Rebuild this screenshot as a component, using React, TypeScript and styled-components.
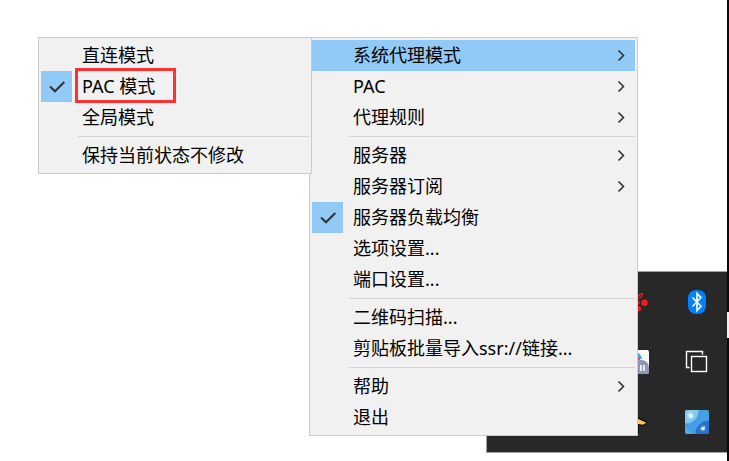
import React from "react";
import styled, { createGlobalStyle, css } from "styled-components";

const GlobalStyle = createGlobalStyle`
  * { box-sizing: border-box; }
  body { margin: 0; background: #fff; }
`;

const Desktop = styled.main`
  position: relative;
  min-height: 100vh;
  overflow: hidden;
  background: #fff;
  color: #000;
  font-family: "Noto Sans", "Noto Sans CJK SC", sans-serif;
  font-size: 18px;
`;

const MenuList = styled.ul`
  margin: 0;
  padding: 2px;
  list-style: none;
  background: #f1f1f1;
  border: 1px solid #ccc;
`;

const ContextMenu = styled(MenuList)`
  position: absolute;
  z-index: 2;
  top: 37px;
  left: 309px;
  min-width: 329px;
`;

const SubMenu = styled(MenuList)`
  position: absolute;
  top: -3px;
  right: 100%;
  min-width: 274px;
`;

const Entry = styled.li`
  position: relative;
`;

const ItemButton = styled.button<{ $active?: boolean }>`
  display: grid;
  grid-template-columns: 31px 1fr 28px;
  align-items: center;
  width: 100%;
  height: 31px;
  padding: 0;
  border: 0;
  background: ${(p) => (p.$active ? "#91c9f7" : "transparent")};
  color: inherit;
  font: inherit;
  line-height: 31px;
  text-align: left;
  white-space: nowrap;
`;

const CheckCell = styled.span<{ $checked?: boolean }>`
  display: grid;
  place-items: center;
  height: 31px;
  background: ${(p) => (p.$checked ? "#91c9f7" : "transparent")};
`;

const Label = styled.span<{ $marked?: boolean }>`
  position: relative;
  justify-self: start;
  height: 31px;
  margin-left: 10px;
  margin-right: 24px;
  ${(p) =>
    p.$marked &&
    css`
      &::after {
        content: "";
        position: absolute;
        inset: -3px -21px -1px -7px;
        border: 3px solid #ff3232;
      }
    `}
`;

const Separator = styled.li`
  height: 1px;
  margin: 3px 0 3px 37px;
  background: #d4d4d4;
`;

const Tray = styled.section`
  position: absolute;
  top: 271px;
  right: 2px;
  display: grid;
  grid-template-columns: repeat(4, 60px);
  grid-auto-rows: 60px;
  border: 1px solid #a0a0a0;
  border-right: 0;
  background: #282828;
`;

const TrayButton = styled.button<{ $column: number }>`
  grid-column: ${(p) => p.$column};
  display: grid;
  place-items: center;
  padding: 0;
  border: 0;
  background: transparent;
`;

const ScreenEdge = styled.div`
  position: absolute;
  top: 0;
  bottom: 0;
  right: 0;
  width: 2px;
  background: #0a0a0a;
`;

const EdgeThumb = styled.div`
  height: 26px;
  margin-top: 312px;
  background: #f0f0f0;
`;

const Check = () => (
  <svg width="17" height="13" viewBox="0 0 17 13" fill="none" aria-hidden="true">
    <path d="M2 6.5 L7 11.3 L16.3 2" stroke="#333" strokeWidth="2" />
  </svg>
);

const Arrow = () => (
  <svg width="28" height="13" viewBox="0 0 28 13" fill="none" aria-hidden="true">
    <path d="M11.5 1.5 L16.5 6.5 L11.5 11.5" stroke="#333" strokeWidth="1.6" />
  </svg>
);

const BerryIcon = () => (
  <svg width="24" height="24" viewBox="0 0 24 24" aria-hidden="true">
    <g fill="#ed1c24">
      <circle cx="19.5" cy="12.7" r="3.2" />
      <circle cx="4.5" cy="12.7" r="3.2" />
      <path d="M12 8.5 C12.4 5 14.5 3 18 3 C18.3 6 17 8 14 9.2 Z" />
      <path d="M12 8.5 C11.6 5 9.5 3 6 3 C5.7 6 7 8 10 9.2 Z" />
      <circle cx="12.5" cy="12.7" r="2.4" />
      <circle cx="13.3" cy="18.7" r="2.7" />
    </g>
    <path d="M12.5 9 L16.5 5" stroke="#282828" strokeWidth="1.2" />
  </svg>
);

const BluetoothIcon = () => (
  <svg width="24" height="24" viewBox="0 0 24 24" fill="none" aria-hidden="true">
    <rect x="3" y="0" width="18" height="24" rx="8" fill="#0082fc" />
    <path d="M7.5 7.5 L16 16.3 L12 20.5 V3.5 L16 7.6 L7.5 16.5" stroke="#fff" strokeWidth="1.6" />
  </svg>
);

const PausedAppIcon = () => (
  <svg width="24" height="24" viewBox="0 0 24 24" fill="none" aria-hidden="true">
    <rect width="24" height="24" rx="2" fill="#f8fafc" />
    <path d="M4 9 A7 6 0 0 1 12 4 Q15 5 15.5 9" stroke="#2ba8ee" strokeWidth="2.5" />
    <circle cx="13" cy="9" r="2" fill="#ef4058" />
    <path d="M9 24 V18 A7.5 7.5 0 0 1 24 17 V22 Q24 24 22 24 Z" fill="#8e96b0" />
    <path d="M16 15 V21 M19 15 V21" stroke="#e8eaf2" strokeWidth="2" />
  </svg>
);

const WindowsIcon = () => (
  <svg width="24" height="24" viewBox="0 0 24 24" fill="none" aria-hidden="true">
    <path d="M17.5 4.5 V1.5 H1.5 V17.5 H4.5" stroke="#fff" strokeWidth="1.4" />
    <rect x="6.5" y="6.5" width="15" height="15" stroke="#fff" strokeWidth="1.4" />
  </svg>
);

const BirdIcon = () => (
  <svg width="24" height="24" viewBox="0 0 24 24" aria-hidden="true">
    <path d="M3 4 L13 7 L23 12.5 L17.5 16 L13.8 15.5 V23 L3 20 Z" fill="#0b0b0b" />
    <path d="M11 7.8 L17.5 11 L21.5 12.8 L17.5 14.8 L11 13.4 Z" fill="#ffc65c" />
  </svg>
);

const BubblesIcon = () => (
  <svg width="24" height="24" viewBox="0 0 24 24" aria-hidden="true">
    <defs>
      <clipPath id="bubbles-clip">
        <rect width="24" height="24" rx="2" />
      </clipPath>
    </defs>
    <g clipPath="url(#bubbles-clip)">
      <rect width="24" height="24" fill="#459fe3" />
      <circle cx="1" cy="1" r="12.5" fill="#83c8f1" />
      <circle cx="5.5" cy="5.5" r="3.4" fill="#a8daf6" />
      <rect x="4" y="4" width="3.4" height="3.4" rx="1" fill="#fff" />
      <circle cx="24" cy="24" r="13.5" fill="#2570d2" />
      <circle cx="18" cy="18.3" r="3.4" fill="#4385da" />
      <path d="M16.3 20 V17.6 L19.6 16.2 V20 Z" fill="#fff" />
      <path d="M0 13 Q3 16 2 19 Q6 20 8 24 H0 Z" fill="#57b1e9" stroke="#3488d0" strokeWidth="0.6" />
    </g>
  </svg>
);

type ItemProps = {
  label: string;
  active?: boolean;
  checked?: boolean;
  marked?: boolean;
  arrow?: boolean;
  children?: React.ReactNode;
};

const MenuItem = ({ label, active, checked, marked, arrow, children }: ItemProps) => (
  <Entry role="none">
    <ItemButton
      type="button"
      role={checked ? "menuitemcheckbox" : "menuitem"}
      aria-checked={checked}
      aria-haspopup={arrow ? "menu" : undefined}
      $active={active}
    >
      <CheckCell $checked={checked}>{checked && <Check />}</CheckCell>
      <Label $marked={marked}>{label}</Label>
      {arrow && <Arrow />}
    </ItemButton>
    {children}
  </Entry>
);

const trayIcons = [
  { name: "Berry", column: 3, icon: <BerryIcon /> },
  { name: "Bluetooth", column: 4, icon: <BluetoothIcon /> },
  { name: "Paused app", column: 3, icon: <PausedAppIcon /> },
  { name: "Windows", column: 4, icon: <WindowsIcon /> },
  { name: "Bird", column: 3, icon: <BirdIcon /> },
  { name: "Bubbles", column: 4, icon: <BubblesIcon /> },
];

export default function App() {
  return (
    <>
      <GlobalStyle />
      <Desktop lang="zh-CN">
        <Tray>
          {trayIcons.map((t) => (
            <TrayButton key={t.name} type="button" aria-label={t.name} $column={t.column}>
              {t.icon}
            </TrayButton>
          ))}
        </Tray>
        <ScreenEdge>
          <EdgeThumb />
        </ScreenEdge>
        <ContextMenu role="menu">
          <MenuItem label="系统代理模式" active arrow>
            <SubMenu role="menu">
              <MenuItem label="直连模式" />
              <MenuItem label="PAC 模式" checked marked />
              <MenuItem label="全局模式" />
              <Separator role="separator" />
              <MenuItem label="保持当前状态不修改" />
            </SubMenu>
          </MenuItem>
          <MenuItem label="PAC" arrow />
          <MenuItem label="代理规则" arrow />
          <Separator role="separator" />
          <MenuItem label="服务器" arrow />
          <MenuItem label="服务器订阅" arrow />
          <MenuItem label="服务器负载均衡" checked />
          <MenuItem label="选项设置..." />
          <MenuItem label="端口设置..." />
          <Separator role="separator" />
          <MenuItem label="二维码扫描..." />
          <MenuItem label="剪贴板批量导入ssr://链接..." />
          <Separator role="separator" />
          <MenuItem label="帮助" arrow />
          <MenuItem label="退出" />
        </ContextMenu>
      </Desktop>
    </>
  );
}
